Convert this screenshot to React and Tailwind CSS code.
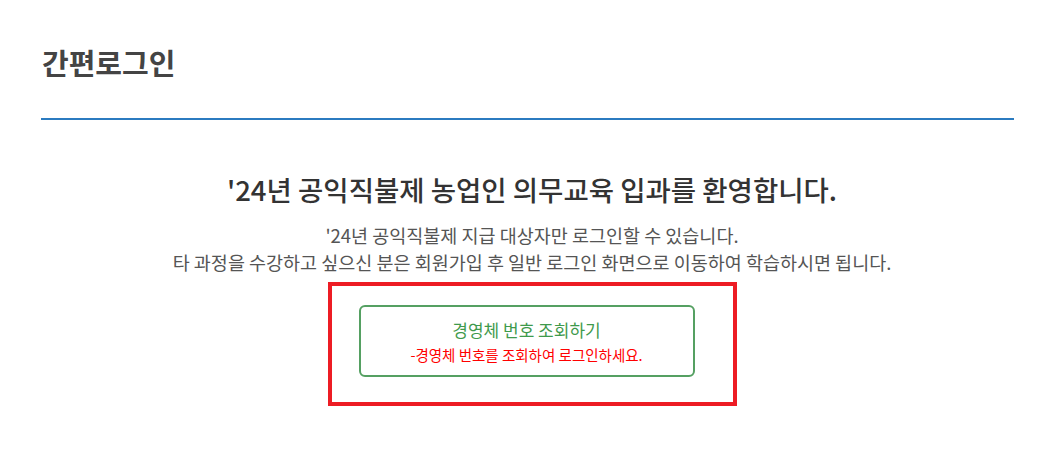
export default function App() {
  return (
    <div className="w-[1044px] h-[450px] bg-white" style={{ fontFamily: '"Noto Sans CJK KR", "Noto Sans", sans-serif' }}>
      <div className="px-[41px] pt-[41px]">
        <h1 className="text-[29px] leading-[42px] font-bold text-[#444] pl-px">간편로그인</h1>
        <div className="mt-[35px] h-[2px] w-[973px] bg-[#2b7bc0]" />
      </div>
      <div className="flex flex-col items-center pl-[20px]">
        <h2 className="mt-[50px] text-[27.5px] leading-[38px] font-medium text-[#333]">'24년 공익직불제 농업인 의무교육 입과를 환영합니다.</h2>
        <p className="mt-[14px] text-[18.5px] leading-[27px] text-[#555] text-center">
          '24년 공익직불제 지급 대상자만 로그인할 수 있습니다.<br />
          타 과정을 수강하고 싶으신 분은 회원가입 후 일반 로그인 화면으로 이동하여 학습하시면 됩니다.
        </p>
        <div className="mt-[6px] border-[4px] border-[#ed1c24] w-[409px] h-[124px] pt-[19px] pl-[27px]">
          <div className="w-[336px] h-[72px] border-2 border-[#55a062] rounded-[6px] flex flex-col items-center justify-center">
            <div className="text-[17px] leading-[24px] text-[#3f9a4c]">경영체 번호 조회하기</div>
            <div className="text-[14.5px] leading-[20px] text-[#ff0000] mt-[3px]">-경영체 번호를 조회하여 로그인하세요.</div>
          </div>
        </div>
      </div>
    </div>
  );
}
